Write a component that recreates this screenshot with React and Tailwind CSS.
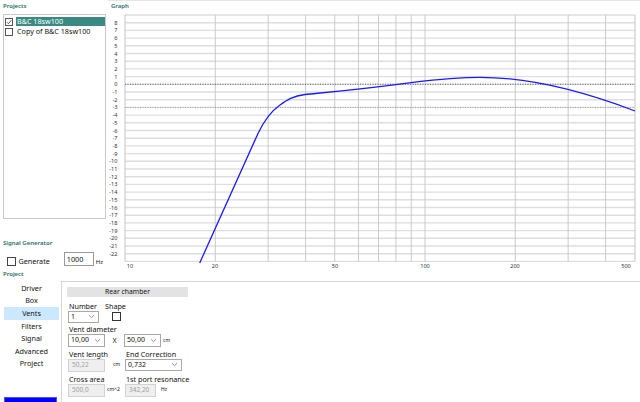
import React from "react";

// chart geometry, page pixels
const yOf = (db) => 84.3 - db * 7.7;
const xOf = (f) => 125 + 300 * Math.log10(f / 10);
const gridDb = Array.from({ length: 33 }, (_, i) => 9 - i);
const labelDb = Array.from({ length: 31 }, (_, i) => 8 - i);
const vLines = [20, 30, 40, 50, 60, 70, 80, 90, 100, 200, 300, 400];
const xLabels = [
  { f: 10, x: 130 },
  { f: 20, x: 215 },
  { f: 50, x: 335 },
  { f: 100, x: 425 },
  { f: 200, x: 515 },
  { f: 500, x: 626 },
];

const navItems = ["Driver", "Box", "Vents", "Filters", "Signal", "Advanced", "Project"];

const Chevron = () => (
  <svg width="7" height="5" viewBox="0 0 7 5" className="shrink-0">
    <path d="M1 1.2 L3.5 3.6 L6 1.2" fill="none" stroke="#8a8a8a" strokeWidth="0.9" />
  </svg>
);

const SelectBox = ({ value, w }) => (
  <div className={`${w} h-[12.5px] border border-[#a8a8a8] bg-white flex items-center justify-between pl-[2px] pr-[3px] text-[7px] text-[#111]`}>
    <span>{value}</span>
    <Chevron />
  </div>
);

const Disabled = ({ value, w }) => (
  <div className={`${w} h-[13px] border border-[#d2d2d2] bg-[#efefef] flex items-center pl-[3px] text-[6.5px] text-[#a0a0a0]`}>
    {value}
  </div>
);

const Graph = () => (
  <svg width="532" height="258" viewBox="108 12 532 258" className="block">
    {gridDb.map((d) => (
      <line key={d} x1="125" x2="635" y1={yOf(d)} y2={yOf(d)} stroke="#dedede" strokeWidth="1.4" />
    ))}
    {vLines.map((f) => (
      <line key={f} x1={xOf(f)} x2={xOf(f)} y1={yOf(9)} y2={yOf(-23)} stroke="#c4c4c4" strokeWidth="0.9" />
    ))}
    <line x1="125" x2="125" y1={yOf(9)} y2={yOf(-23)} stroke="#c4c4c4" strokeWidth="1" />
    <line x1="635" x2="635" y1={yOf(9)} y2={yOf(-23)} stroke="#c4c4c4" strokeWidth="1" />
    <line x1="125" x2="635" y1={yOf(0)} y2={yOf(0)} stroke="#555" strokeWidth="0.9" strokeDasharray="1 1.5" />
    <line x1="125" x2="635" y1={yOf(-3)} y2={yOf(-3)} stroke="#999" strokeWidth="0.9" strokeDasharray="1 1.5" />
    {labelDb.map((d) => (
      <text key={d} x="117.5" y={yOf(d) + 2} textAnchor="end" fontSize="5.6" fill="#333" fontFamily="Noto Sans, sans-serif">
        {d}
      </text>
    ))}
    {xLabels.map((l) => (
      <text key={l.f} x={l.x} y="267.5" textAnchor="middle" fontSize="5.6" fill="#333" fontFamily="Noto Sans, sans-serif">
        {l.f}
      </text>
    ))}
    <path
      d="M199.7,263 L258,133.5 C263,123 270,112 280,105 C287,100 293,96 305,94.5 C330,92 360,89.5 413,82.3 C440,79 460,77.3 480,77.3 C525,77.3 580,90 635,111"
      fill="none"
      stroke="#1a1aff"
      strokeWidth="1.3"
    />
  </svg>
);

export default function App() {
  return (
    <div className="w-[640px] h-[402px] overflow-hidden bg-white font-['Noto_Sans',sans-serif] text-[#111] flex flex-col">
      {/* top: projects + graph */}
      <div className="flex h-[270px]">
        <div className="w-[108px] flex flex-col">
          <div className="h-[14px] pl-[3px] pt-[2px] text-[6px] font-semibold text-[#1f6f69] leading-[9px]">Projects</div>
          <div className="ml-[3px] w-[103px] h-[205px] border border-[#c8c8c8] pt-[2px]">
            <div className="flex items-center h-[9px]">
              <div className="ml-[1px] w-[8px] h-[8px] border border-[#555] bg-white flex items-center justify-center">
                <svg width="6" height="6" viewBox="0 0 6 6">
                  <path d="M0.8 3.1 L2.4 4.7 L5.3 1.2" fill="none" stroke="#333" strokeWidth="0.8" />
                </svg>
              </div>
              <div className="ml-[3px] flex-1 h-[9px] bg-[#3a8a83] text-white text-[7.2px] leading-[9px] pl-[1px]">B&amp;C 18sw100</div>
            </div>
            <div className="flex items-center h-[9px] mt-[1px]">
              <div className="ml-[1px] w-[8px] h-[8px] border border-[#555] bg-white" />
              <div className="ml-[4px] text-[7.2px] leading-[9px]">Copy of B&amp;C 18sw100</div>
            </div>
          </div>
          <div className="mt-[20px] pl-[3px] text-[6px] font-semibold text-[#1f6f69] leading-[8px]">Signal Generator</div>
          <div className="mt-[5px] flex items-start">
            <div className="ml-[7px] mt-[5px] w-[8.5px] h-[8.5px] border border-[#444] bg-white" />
            <div className="ml-[3px] mt-[4px] text-[7.2px] leading-[10px]">Generate</div>
            <div className="ml-[14px] w-[30px] h-[14px] border border-[#9a9a9a] bg-white text-[7.2px] leading-[12px] pl-[2px]">1000</div>
            <div className="ml-[2px] mt-[6px] text-[6px] leading-[8px]">Hz</div>
          </div>
        </div>
        <div className="flex-1 flex flex-col border-t border-[#e6e6e6]">
          <div className="h-[11px] pl-[3px] pt-[1px] text-[6px] font-semibold text-[#1f6f69] leading-[9px]">Graph</div>
          <Graph />
        </div>
      </div>

      {/* bottom: project settings */}
      <div className="pl-[3px] text-[6px] font-semibold text-[#1f6f69] leading-[8px]">Project</div>
      <div className="flex flex-1 mt-[3px]">
        <div className="w-[61px] pt-[1px] flex flex-col">
          {navItems.map((n) => (
            <div
              key={n}
              className={`ml-[4px] w-[55px] h-[12.6px] flex items-center justify-center text-[7.2px] ${n === "Vents" ? "bg-[#cce8ff]" : ""}`}
            >
              {n}
            </div>
          ))}
          <div className="ml-[4px] mt-[27px] w-[53px] h-[14px] bg-[#0000ff] border border-[#4d4dff] flex justify-center text-[7px] text-[#222] leading-[14px] pt-[2px]">
            Color
          </div>
        </div>
        <div className="flex-1 border-l border-t border-[#d6d6d6] pl-[5px] pt-[5px]">
          <div className="w-[121px] h-[9.5px] bg-[#e3e3e3] text-[6.8px] leading-[9.5px] text-center">Rear chamber</div>

          <div className="mt-[4px] flex">
            <div className="w-[37px] ml-[1px]">
              <div className="h-[10px] text-[7.2px] leading-[10px] pl-[1px]">Number</div>
              <SelectBox value="1" w="w-[31px]" />
            </div>
            <div className="w-[30px]">
              <div className="h-[10px] text-[7.2px] leading-[10px]">Shape</div>
              <div className="ml-[7px] mt-[1px] w-[9px] h-[9px] border border-[#333] bg-white" />
            </div>
          </div>

          <div className="mt-[1px] ml-[1px]">
            <div className="h-[10px] text-[7.2px] leading-[10px] pl-[1px]">Vent diameter</div>
            <div className="flex items-center">
              <SelectBox value="10,00" w="w-[37px]" />
              <div className="w-[19px] text-center text-[7px] pt-[2px]">X</div>
              <SelectBox value="50,00" w="w-[37px]" />
              <div className="ml-[2px] text-[5px]">cm</div>
            </div>
          </div>

          <div className="mt-[2px] ml-[1px] flex">
            <div className="w-[57px]">
              <div className="h-[10px] text-[7.2px] leading-[10px] pl-[1px]">Vent length</div>
              <div className="flex items-center">
                <Disabled value="50,22" w="w-[37px]" />
                <div className="ml-[8px] text-[5px]">cm</div>
              </div>
            </div>
            <div>
              <div className="h-[10px] text-[7.2px] leading-[10px] pl-[1px]">End Correction</div>
              <SelectBox value="0,732" w="w-[57px]" />
            </div>
          </div>

          <div className="mt-[2px] ml-[1px] flex">
            <div className="w-[57px]">
              <div className="h-[10px] text-[7.2px] leading-[10px] pl-[1px]">Cross area</div>
              <div className="flex items-center">
                <Disabled value="500,0" w="w-[37px]" />
                <div className="ml-[2px] text-[5px]">cm^2</div>
              </div>
            </div>
            <div>
              <div className="h-[10px] text-[7.2px] leading-[10px] pl-[1px]">1st port resonance</div>
              <div className="flex items-center">
                <Disabled value="342,20" w="w-[31px]" />
                <div className="ml-[5px] text-[5px]">Hz</div>
              </div>
            </div>
          </div>
        </div>
      </div>
    </div>
  );
}
